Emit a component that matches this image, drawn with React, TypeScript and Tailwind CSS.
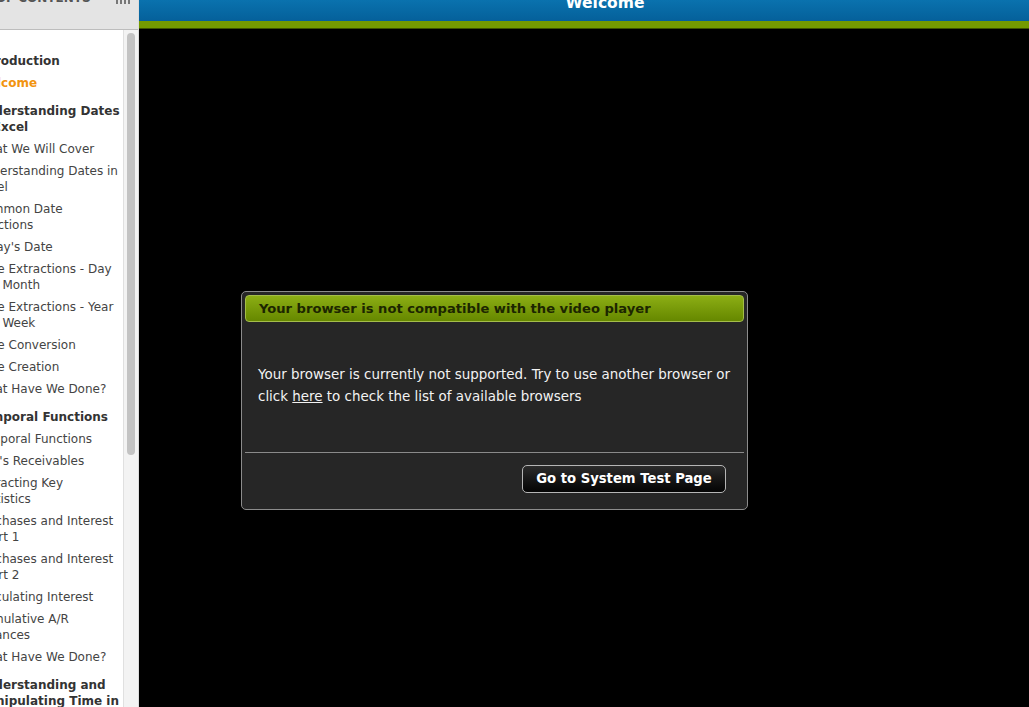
import React from 'react';

type TocItem = { lines: string[]; kind: 'section' | 'item' | 'active' };

const toc: TocItem[] = [
  { lines: ['Introduction'], kind: 'section' },
  { lines: ['Welcome'], kind: 'active' },
  { lines: ['Understanding Dates', 'in Excel'], kind: 'section' },
  { lines: ['What We Will Cover'], kind: 'item' },
  { lines: ['Understanding Dates in', 'Excel'], kind: 'item' },
  { lines: ['Common Date', 'Functions'], kind: 'item' },
  { lines: ["Today's Date"], kind: 'item' },
  { lines: ['Date Extractions - Day', 'and Month'], kind: 'item' },
  { lines: ['Date Extractions - Year', 'and Week'], kind: 'item' },
  { lines: ['Date Conversion'], kind: 'item' },
  { lines: ['Date Creation'], kind: 'item' },
  { lines: ['What Have We Done?'], kind: 'item' },
  { lines: ['Temporal Functions'], kind: 'section' },
  { lines: ['Temporal Functions'], kind: 'item' },
  { lines: ["Vita's Receivables"], kind: 'item' },
  { lines: ['Extracting Key', 'Statistics'], kind: 'item' },
  { lines: ['Purchases and Interest', '- Part 1'], kind: 'item' },
  { lines: ['Purchases and Interest', '- Part 2'], kind: 'item' },
  { lines: ['Calculating Interest'], kind: 'item' },
  { lines: ['Cumulative A/R', 'Balances'], kind: 'item' },
  { lines: ['What Have We Done?'], kind: 'item' },
  { lines: ['Understanding and', 'Manipulating Time in', 'Excel'], kind: 'section' },
];

function Sidebar() {
  return (
    <aside className="w-[139px] shrink-0 flex flex-col bg-white border-r border-[#dcdcdc]">
      {/* Header (clipped at top) */}
      <div className="h-[30px] shrink-0 bg-[#e4e4e4] border-b border-[#bdbdbd] flex items-start overflow-hidden">
        <div className="-mt-[10px] -ml-[50px] text-[12px] font-bold text-[#555] whitespace-nowrap leading-[16px]">
          TABLE OF CONTENTS
        </div>
        <div className="ml-auto mr-[8px] -mt-[6px] flex gap-[2px]">
          <div className="w-[2px] h-[10px] bg-[#777]" />
          <div className="w-[2px] h-[10px] bg-[#777]" />
          <div className="w-[2px] h-[10px] bg-[#777]" />
          <div className="w-[2px] h-[10px] bg-[#777]" />
        </div>
      </div>
      {/* Body */}
      <div className="flex-1 flex overflow-hidden">
        <div className="flex-1 overflow-hidden">
          <ul className="-ml-[24px] pt-[20px] w-[160px]">
            {toc.map((it, i) => (
              <li
                key={i}
                className={
                  'py-[3px] text-[12px] leading-[16px] whitespace-nowrap ' +
                  (it.kind === 'section'
                    ? 'font-bold text-[#333] ' + (i > 0 ? 'mt-[6px]' : '')
                    : it.kind === 'active'
                    ? 'font-bold text-[#f2940f]'
                    : 'text-[#444]')
                }
              >
                {it.lines.map((l, j) => (
                  <div key={j}>{l}</div>
                ))}
              </li>
            ))}
          </ul>
        </div>
        <div className="w-[15px] shrink-0 bg-[#f3f3f3] border-l border-[#e0e0e0] pt-[3px] pl-[3px]">
          <div className="w-[8px] h-[422px] rounded-full bg-[#c3c3c3]" />
        </div>
      </div>
    </aside>
  );
}

export default function App() {
  return (
    <div className="flex h-[707px] w-[1029px] overflow-hidden bg-black font-['DejaVu_Sans',Verdana,sans-serif]">
      <Sidebar />
      <main className="flex-1 flex flex-col min-w-0">
        <div className="h-[21px] shrink-0 bg-gradient-to-b from-[#0a72ae] to-[#05609a] flex justify-center overflow-hidden">
          <div className="-mt-[6px] pl-[42px] text-[15.5px] leading-[18px] font-bold text-white">Welcome</div>
        </div>
        <div className="h-[7px] shrink-0 bg-[#749a00]" />
        <div className="h-[1px] shrink-0 bg-[#3d5200]" />
        <div className="flex-1 pl-[102px] pt-[262px]">
          <div className="w-[507px] h-[219px] rounded-[5px] border border-[#8c8c8c] bg-[#262626] p-[3px] flex flex-col">
            <div className="h-[27px] rounded-[4px] border border-[#a4bd4a] bg-gradient-to-b from-[#8cae14] to-[#668800] flex items-center px-[13px]">
              <span className="text-[13.1px] font-bold text-[#1c2600]">
                Your browser is not compatible with the video player
              </span>
            </div>
            <div className="flex-1 px-[13px] pt-[42px] text-[13.45px] leading-[22px] text-[#f2f2f2]">
              Your browser is currently not supported. Try to use another browser or
              <br />
              click <span className="underline">here</span> to check the list of available browsers
            </div>
            <div className="h-[1px] bg-[#8a8a8a]" />
            <div className="flex justify-end pr-[18px] pt-[12px] pb-[13px]">
              <button className="w-[204px] h-[28px] rounded-[5px] border border-[#b5b5b5] bg-gradient-to-b from-[#2c2c2c] to-[#050505] text-[13.2px] font-bold text-white">
                Go to System Test Page
              </button>
            </div>
          </div>
        </div>
      </main>
    </div>
  );
}
